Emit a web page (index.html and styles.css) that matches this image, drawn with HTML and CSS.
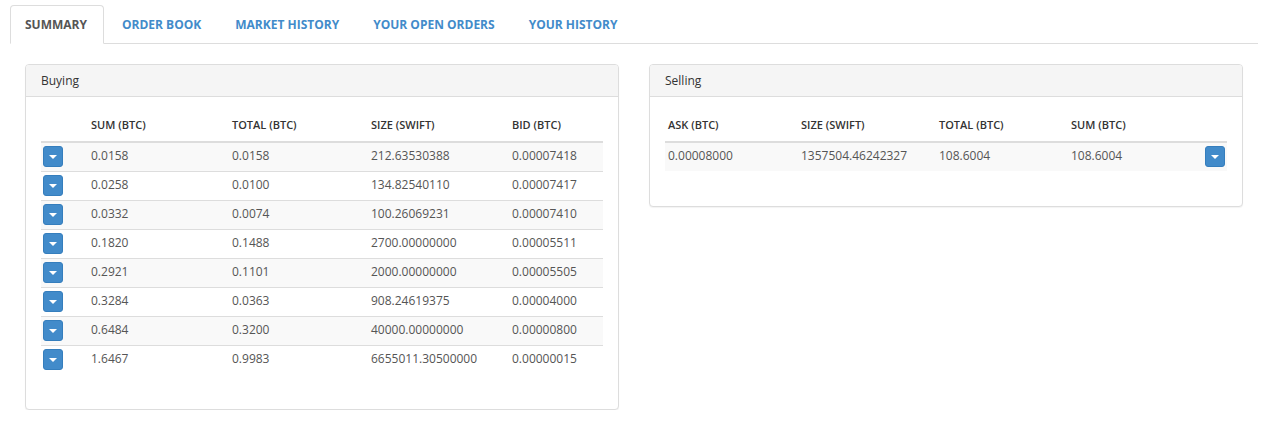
FILE: index.html
```html
<!DOCTYPE html>
<html>
<head>
<meta charset="utf-8">
<link rel="stylesheet" href="styles.css">
</head>
<body>
<div class="page">
  <ul class="tabs">
    <li class="tab active">Summary</li>
    <li class="tab">Order Book</li>
    <li class="tab">Market History</li>
    <li class="tab">Your Open Orders</li>
    <li class="tab">Your History</li>
  </ul>
  <div class="row">
    <div class="col">
      <div class="panel">
        <div class="panel-heading">Buying</div>
        <div class="panel-body">
          <table class="book buy">
            <thead>
              <tr><th class="c-btn"></th><th>Sum (BTC)</th><th>Total (BTC)</th><th>Size (SWIFT)</th><th>Bid (BTC)</th></tr>
            </thead>
            <tbody>
              <tr><td class="c-btn"><span class="btn"><span class="caret"></span></span></td><td>0.0158</td><td>0.0158</td><td>212.63530388</td><td>0.00007418</td></tr>
              <tr><td class="c-btn"><span class="btn"><span class="caret"></span></span></td><td>0.0258</td><td>0.0100</td><td>134.82540110</td><td>0.00007417</td></tr>
              <tr><td class="c-btn"><span class="btn"><span class="caret"></span></span></td><td>0.0332</td><td>0.0074</td><td>100.26069231</td><td>0.00007410</td></tr>
              <tr><td class="c-btn"><span class="btn"><span class="caret"></span></span></td><td>0.1820</td><td>0.1488</td><td>2700.00000000</td><td>0.00005511</td></tr>
              <tr><td class="c-btn"><span class="btn"><span class="caret"></span></span></td><td>0.2921</td><td>0.1101</td><td>2000.00000000</td><td>0.00005505</td></tr>
              <tr><td class="c-btn"><span class="btn"><span class="caret"></span></span></td><td>0.3284</td><td>0.0363</td><td>908.24619375</td><td>0.00004000</td></tr>
              <tr><td class="c-btn"><span class="btn"><span class="caret"></span></span></td><td>0.6484</td><td>0.3200</td><td>40000.00000000</td><td>0.00000800</td></tr>
              <tr><td class="c-btn"><span class="btn"><span class="caret"></span></span></td><td>1.6467</td><td>0.9983</td><td>6655011.30500000</td><td>0.00000015</td></tr>
            </tbody>
          </table>
        </div>
      </div>
    </div>
    <div class="col">
      <div class="panel">
        <div class="panel-heading">Selling</div>
        <div class="panel-body">
          <table class="book sell">
            <thead>
              <tr><th>Ask (BTC)</th><th>Size (SWIFT)</th><th>Total (BTC)</th><th>Sum (BTC)</th><th class="c-btn"></th></tr>
            </thead>
            <tbody>
              <tr><td>0.00008000</td><td>1357504.46242327</td><td>108.6004</td><td>108.6004</td><td class="c-btn r"><span class="btn"><span class="caret"></span></span></td></tr>
            </tbody>
          </table>
        </div>
      </div>
    </div>
  </div>
</div>
</body>
</html>
```

FILE: styles.css
```css
* { box-sizing: border-box; }
html, body { margin: 0; padding: 0; background: #fff; }
body {
  font-family: "Open Sans", "Liberation Sans", sans-serif;
  font-size: 12px;
  color: #555;
  line-height: 17px;
}
.page { padding: 5px 24px 0 10px; }
.tabs {
  list-style: none;
  margin: 0;
  padding: 0;
  display: flex;
  border-bottom: 1px solid #ddd;
}
.tab {
  font-weight: 700;
  text-transform: uppercase;
  color: #428bca;
  padding: 10px 15px;
  margin-right: 2px;
  margin-bottom: -1px;
  border: 1px solid transparent;
  border-radius: 4px 4px 0 0;
  line-height: 17px;
}
.tab.active {
  color: #555;
  background: #fff;
  border-color: #ddd #ddd transparent #ddd;
  padding-left: 14px;
  padding-right: 16px;
}
.row {
  display: flex;
  margin-top: 20px;
}
.col {
  flex: 1 1 0;
  padding: 0 15px;
}
.panel {
  border: 1px solid #ddd;
  border-radius: 4px;
  background: #fff;
  box-shadow: 0 1px 1px rgba(0,0,0,0.05);
}
.panel-heading {
  background: #f5f5f5;
  border-bottom: 1px solid #ddd;
  border-radius: 3px 3px 0 0;
  padding: 7px 15px;
  height: 32px;
  color: #333;
}
.panel-body { padding: 15px; }
.book {
  width: 100%;
  border-collapse: collapse;
  border-spacing: 0;
  margin-bottom: 20px;
}
.book th {
  text-align: left;
  font-weight: 600;
  text-transform: uppercase;
  font-size: 11px;
  color: #333;
  padding: 3px 3px 8px 3px;
  height: 30px;
  border-bottom: 2px solid #ddd;
  vertical-align: middle;
}
.book td {
  padding: 3px 3px;
  height: 29px;
  border-top: 1px solid #ddd;
  vertical-align: top;
  line-height: 17px;
}
.book td:not(.c-btn) { padding-top: 4px; }
.book tbody tr:nth-child(odd) td { background: #f9f9f9; }
.book tbody tr:first-child td { border-top: 0; }
.buy th:nth-child(1) { width: 47px; }
.buy th:nth-child(2) { width: 141px; }
.buy th:nth-child(3) { width: 139px; }
.buy th:nth-child(4) { width: 141px; }
.sell th:nth-child(1) { width: 133px; }
.sell th:nth-child(2) { width: 138px; }
.sell th:nth-child(3) { width: 132px; }
.sell th:nth-child(4) { width: 120px; }
.c-btn { padding-left: 2px !important; }
.c-btn.r { text-align: right; padding-right: 2px !important; }
.btn {
  display: inline-flex;
  align-items: center;
  justify-content: center;
  width: 20px;
  height: 21px;
  background: #428bca;
  border: 1px solid #357ebd;
  border-radius: 3px;
  vertical-align: top;
}
.caret {
  width: 0;
  height: 0;
  border-left: 4px solid transparent;
  border-right: 4px solid transparent;
  border-top: 4px solid #fff;
  margin-top: 1px;
}
```
